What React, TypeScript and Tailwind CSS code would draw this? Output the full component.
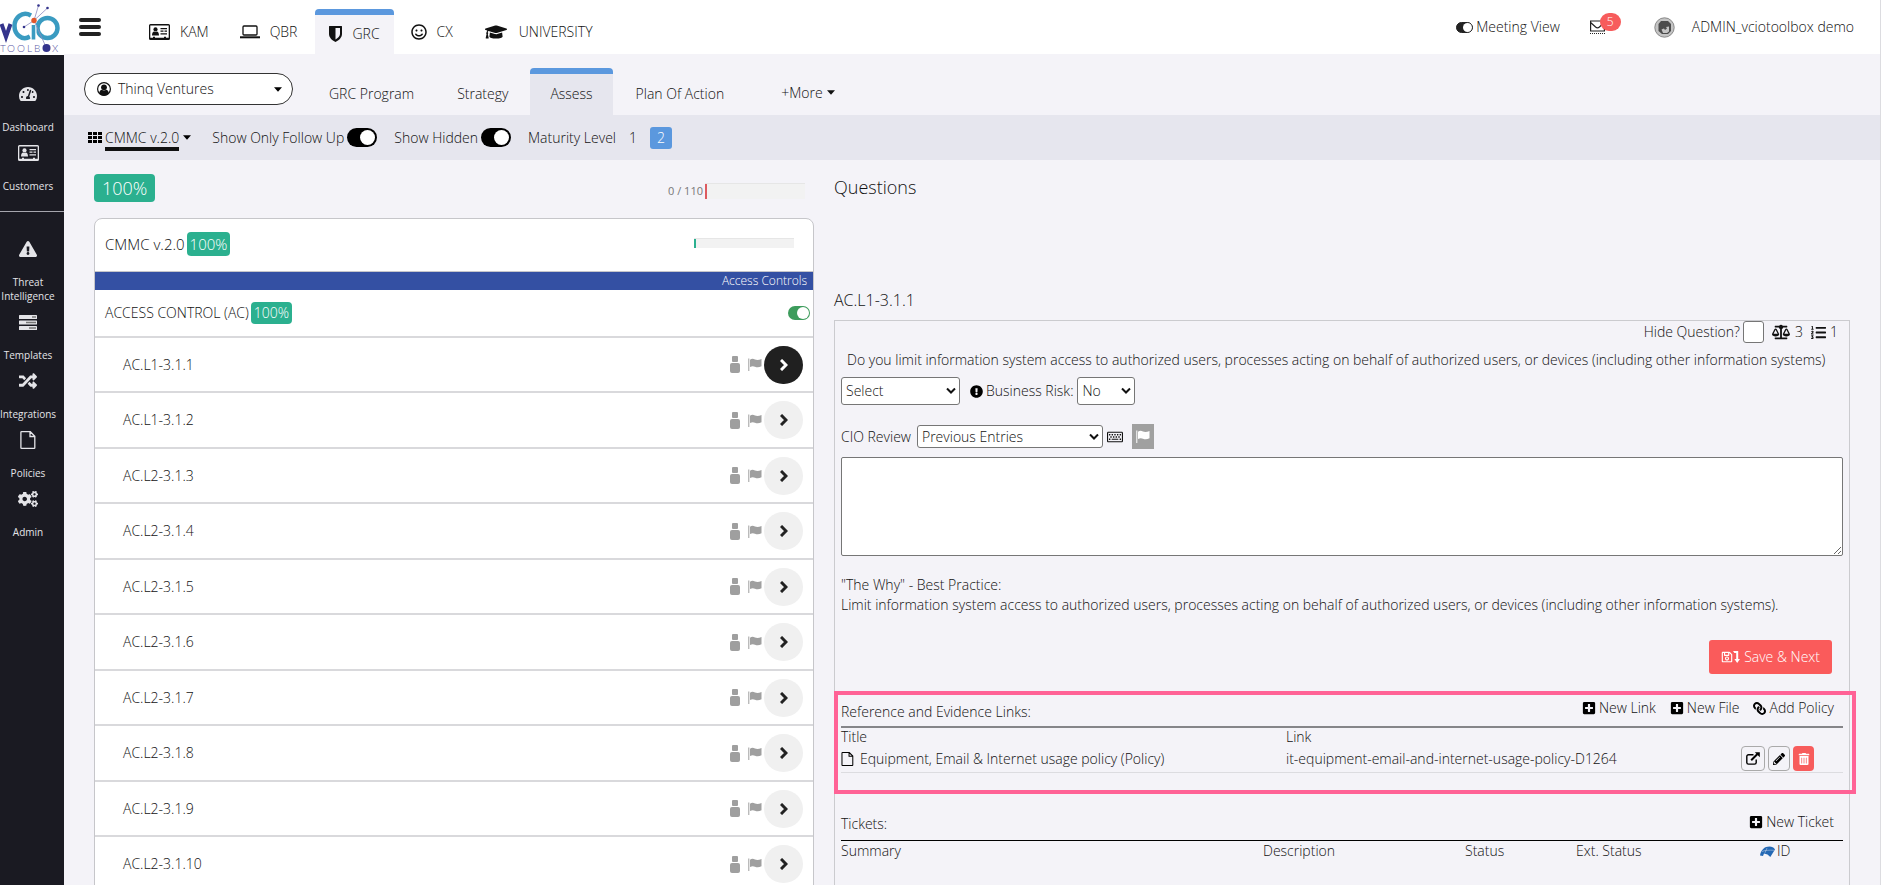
import { useState, type ReactNode } from "react";
import {
  FaBalanceScale,
  FaCogs,
  FaExclamationCircle,
  FaExclamationTriangle,
  FaGraduationCap,
  FaLink,
  FaListOl,
  FaPencilAlt,
  FaPlusSquare,
  FaRandom,
  FaRegKeyboard,
  FaRegSave,
  FaRegSmile,
  FaTachometerAlt,
  FaTrashAlt,
} from "react-icons/fa";

type IconProps = { className?: string };

function CardIcon({ className }: IconProps) {
  return (
    <svg viewBox="0 0 21 16" className={className} fill="currentColor" aria-hidden="true">
      <path fillRule="evenodd" d="M1.5 0h18A1.5 1.5 0 0 1 21 1.500v13A1.500 1.500 0 0 1 19.500 16h-18A1.500 1.500 0 0 1 0 14.500v-13A1.500 1.500 0 0 1 1.500 0zM1.300 1.500v12.200H4v-.9h2v.9h9v-.9h2v.9h2.700V1.500z" />
      <circle cx="6.500" cy="5.400" r="2.100" />
      <path d="M3 11.600c0-2.600 1-4 2.200-4 .8.600 1.800.6 2.600 0 1.200 0 2.200 1.400 2.200 4z" />
      <path d="M11.500 4H18v1.200h-6.500zM11.500 6.600h3v1.200h-3zM15.500 6.600H18v1.200h-2.500zM11.500 9.300H18v1.200h-6.500z" />
    </svg>
  );
}

function LaptopIcon({ className }: IconProps) {
  return (
    <svg viewBox="0 0 20 14" className={className} fill="none" stroke="currentColor" aria-hidden="true">
      <rect x="3" y="1" width="14" height="9" rx="1" strokeWidth="1.300" />
      <path d="M0 12.300h20" strokeWidth="2" />
    </svg>
  );
}

function ShieldIcon({ className }: IconProps) {
  return (
    <svg viewBox="0 0 13 16" className={className} fill="currentColor" aria-hidden="true">
      <path fillRule="evenodd" d="M.5 0h12a.5.5 0 0 1 .5.5V8c0 3.500-3 6.300-6.500 8C3 14.300 0 11.500 0 8V.5A.5.5 0 0 1 .5 0zM6.500 2v11.500C9 12 11 10.200 11 8V2z" />
    </svg>
  );
}

function FileIcon({ className }: IconProps) {
  return (
    <svg viewBox="0 0 16 18" className={className} fill="none" stroke="currentColor" strokeWidth="1.300" aria-hidden="true">
      <path d="M1.500.7h8.800l4.500 4.500v11.500a.6.6 0 0 1-.6.600H1.500a.6.6 0 0 1-.6-.6V1.300a.6.6 0 0 1 .6-.6zM10 .7v4.800h4.800" />
    </svg>
  );
}

function TasksIcon({ className }: IconProps) {
  return (
    <svg viewBox="0 0 18 15" className={className} fill="currentColor" aria-hidden="true">
      <rect width="18" height="4" rx="0.600" />
      <rect y="5.500" width="18" height="4" rx="0.600" />
      <rect y="11" width="18" height="4" rx="0.600" />
      <path fill="#777" d="M13 1.200h4v1.600h-4zM7 6.700h10v1.600H7zM10 12.200h7v1.600h-7z" />
    </svg>
  );
}

function GridIcon({ className }: IconProps) {
  return (
    <svg viewBox="0 0 14 11" className={className} fill="currentColor" aria-hidden="true">
      <path d="M0 0h4v3H0zM5 0h4v3H5zM10 0h4v3h-4zM0 4h4v3H0zM5 4h4v3H5zM10 4h4v3h-4zM0 8h4v3H0zM5 8h4v3H5zM10 8h4v3h-4z" />
    </svg>
  );
}

function UserCircleIcon({ className }: IconProps) {
  return (
    <svg viewBox="0 0 14 14" className={className} fill="currentColor" aria-hidden="true">
      <circle cx="7" cy="7" r="6.400" fill="none" stroke="currentColor" strokeWidth="1.200" />
      <circle cx="7" cy="5.300" r="2.900" />
      <path d="M2.200 11.500C2.400 9 3.600 8 4.800 7.800c1.300.8 3.100.8 4.400 0 1.200.2 2.400 1.200 2.600 3.700C9.500 14.200 4.500 14.200 2.200 11.500z" />
    </svg>
  );
}

function PersonIcon({ className }: IconProps) {
  return (
    <svg viewBox="0 0 10 17" className={className} fill="currentColor" aria-hidden="true">
      <rect x="2" width="6" height="6" rx="1" />
      <rect y="7" width="10" height="10" rx="2" />
    </svg>
  );
}

function WavyFlagIcon({ className }: IconProps) {
  return (
    <svg viewBox="0 0 14 13" className={className} fill="currentColor" aria-hidden="true">
      <path d="M.3.5h1V13h-1zM2 1.700C4 .4 5.500.8 7 1.500c2 .8 4 .5 6.500-.6v7.300c-2.500 1.300-4.500 1.300-6.500.5-1.500-.6-3-.8-5 .4z" />
    </svg>
  );
}

function CaretDown({ className }: IconProps) {
  return (
    <svg viewBox="0 0 8 5" className={className} fill="currentColor" aria-hidden="true">
      <path d="M0 .3h8L4 4.800z" />
    </svg>
  );
}

function ChevronRight({ className }: IconProps) {
  return (
    <svg viewBox="0 0 8 12" className={className} fill="none" stroke="currentColor" strokeWidth="3" aria-hidden="true">
      <path d="M1 1l5 5-5 5" />
    </svg>
  );
}

function ExternalIcon({ className }: IconProps) {
  return (
    <svg viewBox="0 0 14 13" className={className} fill="none" stroke="currentColor" aria-hidden="true">
      <path d="M7.500 2.700H2.500A1.700 1.700 0 0 0 .8 4.400v6A1.700 1.700 0 0 0 2.500 12.100h6a1.700 1.700 0 0 0 1.700-1.700V7.500" strokeWidth="1.400" />
      <path d="M5.200 8.300L11.500 2" strokeWidth="2" />
      <path d="M8.800.3h5v5z" fill="currentColor" stroke="none" />
    </svg>
  );
}

function LevelDownIcon({ className }: IconProps) {
  return (
    <svg viewBox="0 0 7 12" className={className} fill="currentColor" aria-hidden="true">
      <path d="M0 0h5.200v8H7l-2.800 4-2.800-4h1.800V2H1.400z" />
    </svg>
  );
}

function TicketLogo({ className }: IconProps) {
  return (
    <svg viewBox="0 0 15 11" className={className} aria-hidden="true">
      <path fill="#2468b4" d="M0 9.500C.8 4 4.500.6 9.500.6c2.500 0 4.300 1 5.500 2.800L10.300 11 7.500 8.500 4 7.500 3 10z" />
      <path fill="none" stroke="#f4f3f8" strokeWidth="0.400" d="M2 5.500c3-1.300 7-1.500 12-1.200M5 6.800L7 2" />
    </svg>
  );
}

function BrandLogo() {
  return (
    <svg viewBox="0 0 64 55" className="block h-[55px] w-16 bg-white" role="img" aria-label="vCIO Toolbox">
      <g fill="none">
        <path d="M31 15.500C22 10.500 14.500 18 14.500 26S22 41.500 30 36.500" stroke="#3a9bc1" strokeWidth="4.500" />
        <circle cx="47.500" cy="28" r="10" stroke="#3a9bc1" strokeWidth="4.500" />
        <path d="M33.500 25v14.500" stroke="#fff" strokeWidth="6" />
        <path d="M33.500 25v14.500" stroke="#3a9bc1" strokeWidth="3.600" />
        <path d="M1.500 24L6 37l4.500-13" stroke="#34348c" strokeWidth="4" />
        <path d="M34 20.500L24 27M34 20.500L38.500 5.500M34 20.500L47.500 8M34 20.500L46 47" stroke="#8a8ac0" strokeWidth="0.800" />
      </g>
      <circle cx="34" cy="20.500" r="2.700" fill="#e2572b" />
      <circle cx="38.500" cy="5.500" r="1.300" fill="#34348c" />
      <circle cx="47.500" cy="8" r="1.300" fill="#34348c" />
      <circle cx="24" cy="27" r="1.300" fill="#34348c" />
      <circle cx="46.500" cy="48" r="4" fill="#34348c" />
      <g fill="#5a5aa5" fontFamily="Lato, sans-serif" fontSize="10">
        <text x="0" y="51.500">T</text>
        <text x="7" y="51.500">O</text>
        <text x="17" y="51.500">O</text>
        <text x="27" y="51.500">L</text>
        <text x="34" y="51.500">B</text>
        <text x="52" y="51.500">X</text>
      </g>
    </svg>
  );
}

const SIDEBAR = [
  { label: "Dashboard", icon: <FaTachometerAlt className="size-[18px]" /> },
  { label: "Customers", icon: <CardIcon className="h-4 w-[21px]" /> },
];

const SIDEBAR_TOOLS = [
  { label: "Threat Intelligence", icon: <FaExclamationTriangle className="size-[18px]" /> },
  { label: "Templates", icon: <TasksIcon className="h-[15px] w-[18px]" /> },
  { label: "Integrations", icon: <FaRandom className="size-[18px]" /> },
  { label: "Policies", icon: <FileIcon className="h-[18px] w-4" /> },
  { label: "Admin", icon: <FaCogs className="size-5" /> },
];

const CONTROLS = [
  "AC.L1-3.1.1",
  "AC.L1-3.1.2",
  "AC.L2-3.1.3",
  "AC.L2-3.1.4",
  "AC.L2-3.1.5",
  "AC.L2-3.1.6",
  "AC.L2-3.1.7",
  "AC.L2-3.1.8",
  "AC.L2-3.1.9",
  "AC.L2-3.1.10",
];

function SidebarItem({ label, icon }: { label: string; icon: ReactNode }) {
  return (
    <a href="#" className="flex w-14 flex-col items-center text-[10px] leading-[14px] font-normal">
      <span className="flex h-5 items-center">{icon}</span>
      <span className="mt-4 mb-[9px] text-center">{label}</span>
    </a>
  );
}

function ToggleSwitch({ label }: { label: string }) {
  const [on, setOn] = useState(true);
  return (
    <label className="flex items-center gap-[3px]">
      {label}
      <input type="checkbox" checked={on} onChange={() => setOn(!on)} className="peer sr-only" />
      <span className="flex h-[19px] w-[30px] items-center justify-start rounded-full bg-black px-[2px] peer-checked:justify-end">
        <span className="size-[15px] rounded-full bg-white" />
      </span>
    </label>
  );
}

function Select({ id, value, className }: { id: string; value: string; className: string }) {
  return (
    <span className={`relative inline-flex ${className}`}>
      <select
        id={id}
        defaultValue={value}
        className="w-full appearance-none rounded-[3px] border border-[#767676] bg-white pl-1 text-[14px]"
      >
        <option>{value}</option>
      </select>
      <svg viewBox="0 0 10 7" className="pointer-events-none absolute top-1/2 right-1 h-[7px] w-[10px] -translate-y-1/2" fill="none" stroke="#111" strokeWidth="2" aria-hidden="true">
        <path d="M1 1l4 4 4-4" />
      </svg>
    </span>
  );
}

function ActionButton({ icon, children }: { icon: ReactNode; children: ReactNode }) {
  return (
    <button type="button" className="flex items-center gap-[3px] leading-4">
      {icon}
      {children}
    </button>
  );
}

function Sidebar() {
  return (
    <aside className="flex w-16 shrink-0 flex-col bg-[#1a1a22] text-[#e4e4e8]">
      <BrandLogo />
      <nav className="flex flex-col items-start pt-[29px]">
        {SIDEBAR.map((item) => (
          <SidebarItem key={item.label} {...item} />
        ))}
        <hr className="mt-[9px] mb-[27px] w-full border-[#a5a5ad]" />
        {SIDEBAR_TOOLS.map((item) => (
          <SidebarItem key={item.label} {...item} />
        ))}
      </nav>
    </aside>
  );
}

function TopBar() {
  return (
    <header className="flex h-[54px] items-stretch bg-white pr-[26px] pl-[15px]">
      <button type="button" aria-label="Menu" className="mr-12 flex w-[22px] flex-col gap-[3px] self-center">
        <span className="h-1 rounded bg-[#222]" />
        <span className="h-1 rounded bg-[#222]" />
        <span className="h-1 rounded bg-[#222]" />
      </button>
      <nav className="flex">
        <a href="#" className="flex items-center gap-[10px] pt-[10px] pr-[31px]">
          <CardIcon className="h-4 w-[21px]" />
          KAM
        </a>
        <a href="#" className="flex items-center gap-[10px] pt-[10px] pr-[18px]">
          <LaptopIcon className="h-[14px] w-5" />
          QBR
        </a>
        <a href="#" className="mt-[9px] flex items-center gap-[10px] rounded-t border-t-[6px] border-[#5b98de] bg-[#f4f3f8] px-[14px] pb-[2px]">
          <ShieldIcon className="h-4 w-[13px]" />
          GRC
        </a>
        <a href="#" className="flex items-center gap-[10px] pt-[10px] pr-8 pl-[17px]">
          <FaRegSmile className="size-4" />
          CX
        </a>
        <a href="#" className="flex items-center gap-3 pt-[10px]">
          <FaGraduationCap className="size-[22px]" />
          UNIVERSITY
        </a>
      </nav>
      <div className="ml-auto flex items-center">
        <label className="flex items-center gap-[3px]">
          <input type="checkbox" defaultChecked className="peer sr-only" />
          <span className="flex h-[11px] w-[17px] justify-end rounded-full border border-[#222] bg-[#222]">
            <span className="size-[9px] rounded-full bg-white" />
          </span>
          Meeting View
        </label>
        <button type="button" aria-label="Messages, 5 unread" className="relative ml-[30px] w-[15px]">
          <svg viewBox="0 0 15 14" className="h-[14px] w-[15px]" fill="none" stroke="#222" aria-hidden="true">
            <path d="M.6 1h13.800v10H.6zM.6 2.500l5 4.500c1.200 1 2.600 1 3.800 0l5-4.500" strokeWidth="1.200" />
            <path d="M0 13.500h15" strokeDasharray="1 1" />
          </svg>
          <span className="absolute -top-[7px] left-[10px] flex h-[18px] w-[21px] items-center justify-center rounded-full bg-[#f75c5c] text-xs text-white">
            5
          </span>
        </button>
        <button type="button" className="ml-[49px] flex items-center gap-[17px]">
          <svg viewBox="0 0 21 21" className="size-[21px]" aria-hidden="true">
            <circle cx="10.500" cy="10.500" r="9.700" fill="#c4c4c4" stroke="#888" />
            <path fill="#4c4c4c" d="M7 4h7l3 3v7l-3 3H8l-3.500-3V7z" />
            <path fill="#c4c4c4" d="M7.500 12.500l2.500-1 1 1.500 2-1.500-1-1.500 3-.5v5l-2 1.500H9z" />
          </svg>
          ADMIN_vciotoolbox demo
        </button>
      </div>
    </header>
  );
}

function SubNav() {
  return (
    <div className="flex h-[61px] items-stretch pl-5">
      <button type="button" className="mt-[19px] flex h-8 w-[209px] items-center gap-[7px] rounded-full border border-[#333] bg-white pr-[10px] pl-3">
        <UserCircleIcon className="size-[14px]" />
        Thinq Ventures
        <CaretDown className="ml-auto h-[5px] w-2 text-black" />
      </button>
      <nav className="flex pl-9">
        <a href="#" className="flex items-center pt-[18px] pr-[21px]">GRC Program</a>
        <a href="#" className="flex items-center px-[22px] pt-[18px]">Strategy</a>
        <a href="#" className="mt-[14px] flex items-center rounded-t border-t-[6px] border-[#5b98de] bg-[#e6e6ee] px-5 pb-[2px]">
          Assess
        </a>
        <a href="#" className="flex items-center px-[23px] pt-[18px]">Plan Of Action</a>
        <button type="button" className="ml-[34px] flex items-center gap-1 pt-[16px]">
          +More
          <CaretDown className="h-[5px] w-2" />
        </button>
      </nav>
    </div>
  );
}

function FilterBar() {
  return (
    <div className="flex h-[45px] items-center bg-[#e6e6ee] pl-6">
      <button type="button" className="mr-[21px] flex items-center gap-[3px]">
        <GridIcon className="h-[11px] w-[14px] text-black" />
        <span className="border-b-4 border-[#111] pt-1 leading-[18px]">CMMC v.2.0</span>
        <CaretDown className="ml-[1px] h-[5px] w-2 text-black" />
      </button>
      <div className="flex items-center gap-[17px]">
        <ToggleSwitch label="Show Only Follow Up" />
        <ToggleSwitch label="Show Hidden" />
        <span>Maturity Level</span>
      </div>
      <button type="button" className="ml-[6px] size-[22px]">1</button>
      <button type="button" className="ml-[6px] size-[22px] rounded-[3px] bg-[#5b98de] text-white">2</button>
    </div>
  );
}

function ControlList() {
  const [active, setActive] = useState("AC.L1-3.1.1");
  return (
    <section className="w-[720px] shrink-0">
      <div className="flex h-[58px] items-center justify-between pr-[9px] pb-[2px]">
        <span className="rounded bg-[#2bb08f] px-2 text-[18px] leading-7 text-white">100%</span>
        <div className="flex items-center gap-[2px] pt-[6px] text-[11px] font-normal text-[#777]">
          0 / 110
          <div className="h-4 w-[100px] border-t border-[#e6e6e6] bg-[#f2f2f2]">
            <div className="h-full w-[2px] bg-[#dd5a60]" />
          </div>
        </div>
      </div>
      <div className="rounded-t-lg border border-[#c6c6ca] bg-white">
        <div className="flex h-[53px] items-center justify-between border-b border-[#c6c6ca] pr-[19px] pb-1 pl-[10px] text-[15px]">
          <div className="flex items-center gap-[2px] pt-[2px]">
            CMMC v.2.0
            <span className="rounded bg-[#2bb08f] px-[3px] leading-6 text-white">100%</span>
          </div>
          <div className="h-[10px] w-[100px] border-t border-[#e6e6e6] bg-[#f2f2f2]">
            <div className="h-full w-[2px] bg-[#2bb08f]" />
          </div>
        </div>
        <div className="bg-[#3450a3] pr-[6px] text-right text-xs leading-[18px] text-white">Access Controls</div>
        <div className="flex h-[46px] items-center justify-between pr-[3px] pb-[1px] pl-[10px]">
          <div className="flex items-center gap-[2px]">
            ACCESS CONTROL (AC)
            <span className="rounded bg-[#2bb08f] px-[3px] leading-[22px] text-white">100%</span>
          </div>
          <label>
            <input type="checkbox" defaultChecked aria-label="Access Control enabled" className="peer sr-only" />
            <span className="flex h-[14px] w-[22px] items-center justify-end rounded-full bg-[#3d9c5c] p-[1px]">
              <span className="size-3 rounded-full bg-white" />
            </span>
          </label>
        </div>
        <ul>
          {CONTROLS.map((code) => (
            <li key={code} className="flex items-center border-t-2 border-[#d9d9dc] pr-[10px] pl-7 odd:h-[55px] even:h-[56px]">
              <span>{code}</span>
              <PersonIcon className="ml-auto h-[17px] w-[10px] text-[#9f9f9f]" />
              <WavyFlagIcon className="mr-[2px] ml-2 h-[13px] w-[14px] text-[#9f9f9f]" />
              <button
                type="button"
                aria-label={`Open ${code}`}
                onClick={() => setActive(code)}
                className={`flex h-[38px] w-[39px] items-center justify-center rounded-full ${
                  active === code ? "bg-[#202020] text-white" : "bg-[#f0f0f0] text-[#222]"
                }`}
              >
                <ChevronRight className="h-3 w-2" />
              </button>
            </li>
          ))}
        </ul>
      </div>
    </section>
  );
}

function EvidenceLinks() {
  return (
    <div className="relative pb-[21px]">
      {/* Highlight around the links block */}
      <div className="pointer-events-none absolute -top-[9px] -right-[13px] bottom-0 -left-[7px] border-4 border-[#ff6296]" />
      <div className="flex h-7 items-start justify-between border-b-2 border-[#858589]">
        <h3 className="pt-[2px]">Reference and Evidence Links:</h3>
        <div className="flex gap-[14px] pr-[9px]">
          <ActionButton icon={<FaPlusSquare className="size-[14px] text-black" />}>New Link</ActionButton>
          <ActionButton icon={<FaPlusSquare className="size-[14px] text-black" />}>New File</ActionButton>
          <ActionButton icon={<FaLink className="size-[13px] -scale-x-100 text-black" />}>Add Policy</ActionButton>
        </div>
      </div>
      <table className="w-full table-fixed border-b border-[#dcdce0] text-left">
        <thead>
          <tr className="leading-[18px]">
            <th className="w-[445px] font-light">Title</th>
            <th className="font-light">Link</th>
            <th className="w-[102px]" aria-label="Actions" />
          </tr>
        </thead>
        <tbody>
          <tr>
            <td>
              <span className="flex items-center gap-[6px]">
                <FileIcon className="h-[14px] w-[13px] text-black" />
                Equipment, Email &amp; Internet usage policy (Policy)
              </span>
            </td>
            <td>it-equipment-email-and-internet-usage-policy-D1264</td>
            <td>
              <div className="flex gap-[3px] pb-[1px] text-black">
                <button type="button" aria-label="Open link" className="flex h-[25px] w-6 items-center justify-center rounded border border-[#aaa]">
                  <ExternalIcon className="h-[13px] w-[14px]" />
                </button>
                <button type="button" aria-label="Edit link" className="flex h-[25px] w-[22px] items-center justify-center rounded border border-[#aaa]">
                  <FaPencilAlt className="size-3" />
                </button>
                <button type="button" aria-label="Delete link" className="flex h-[25px] w-[21px] items-center justify-center rounded bg-[#f75c5c] text-white">
                  <FaTrashAlt className="size-3" />
                </button>
              </div>
            </td>
          </tr>
        </tbody>
      </table>
    </div>
  );
}

function Tickets() {
  return (
    <div className="mt-[18px]">
      <div className="flex h-[29px] items-start justify-between border-b border-black pt-[2px] pr-[9px]">
        <h3>Tickets:</h3>
        <ActionButton icon={<FaPlusSquare className="size-[14px] text-black" />}>New Ticket</ActionButton>
      </div>
      <table className="w-full table-fixed text-left">
        <thead>
          <tr>
            <th className="w-[422px] font-light">Summary</th>
            <th className="w-[202px] font-light">Description</th>
            <th className="w-[111px] font-light">Status</th>
            <th className="w-[184px] font-light">Ext. Status</th>
            <th className="font-light">
              <span className="flex items-center gap-[2px]">
                <TicketLogo className="h-[11px] w-[15px]" />
                ID
              </span>
            </th>
          </tr>
        </thead>
      </table>
    </div>
  );
}

function QuestionPanel() {
  return (
    <section className="mr-[30px] flex min-w-0 flex-1 flex-col">
      <h1 className="mt-[15px] text-[18px] leading-6">Questions</h1>
      <h2 className="mt-[89px] mb-2 text-base leading-6">AC.L1-3.1.1</h2>
      <div className="flex-1 border border-b-0 border-[#cbcbcf] px-[6px]">
        <div className="flex h-[22px] items-center justify-end gap-2 pr-[5px]">
          <label className="flex items-center gap-[3px]">
            Hide Question?
            <input type="checkbox" className="h-[22px] w-[21px] appearance-none rounded-[3px] border border-[#767676] bg-white" />
          </label>
          <span className="flex items-center gap-[5px]">
            <FaBalanceScale className="size-[18px]" />3
          </span>
          <span className="flex items-center gap-1">
            <FaListOl className="size-[15px]" />1
          </span>
        </div>
        <p className="mt-[7px] pl-[6px] leading-5">
          Do you limit information system access to authorized users, processes acting on behalf of authorized users, or devices (including other information systems)
        </p>
        <div className="mt-[7px] flex items-center">
          <Select id="answer" value="Select" className="mr-[10px] h-7 w-[119px]" />
          <label htmlFor="risk" className="mr-1 flex items-center gap-[3px]">
            <FaExclamationCircle className="size-[13px] text-black" />
            Business Risk:
          </label>
          <Select id="risk" value="No" className="h-7 w-[58px]" />
        </div>
        <div className="mt-[19px] mb-2 flex items-center">
          <label htmlFor="review" className="mr-[6px]">CIO Review</label>
          <Select id="review" value="Previous Entries" className="mr-1 h-[23px] w-[186px]" />
          <FaRegKeyboard className="size-4" />
          <button type="button" aria-label="Flag" className="ml-[9px] flex h-[25px] w-[22px] items-center justify-center bg-[#a0a0a0] text-white">
            <WavyFlagIcon className="h-[13px] w-[14px]" />
          </button>
        </div>
        <textarea aria-label="CIO Review" className="block h-[99px] w-full rounded-[2px] border border-[#767676] bg-white" />
        <p className="mt-[19px] leading-5">
          "The Why" - Best Practice:
          <br />
          Limit information system access to authorized users, processes acting on behalf of authorized users, or devices (including other information systems).
        </p>
        <div className="mt-[25px] mb-[26px] flex justify-end pr-[11px]">
          <button type="button" className="flex h-[34px] items-center rounded-[3px] bg-[#fa5b5b] px-3 text-white">
            <FaRegSave className="size-3" />
            <LevelDownIcon className="mr-1 h-3 w-[7px]" />
            Save &amp; Next
          </button>
        </div>
        <EvidenceLinks />
        <Tickets />
      </div>
    </section>
  );
}

export default function App() {
  return (
    <div className="flex h-screen overflow-hidden bg-[#f4f3f8] font-['Open_Sans',sans-serif] text-[14px] leading-5 font-light text-[#111]">
      <Sidebar />
      <div className="flex min-w-0 flex-1 flex-col border-r border-[#dcdce0]">
        <TopBar />
        <SubNav />
        <FilterBar />
        <main className="flex min-h-0 flex-1 gap-5 pl-[30px]">
          <ControlList />
          <QuestionPanel />
        </main>
      </div>
    </div>
  );
}
